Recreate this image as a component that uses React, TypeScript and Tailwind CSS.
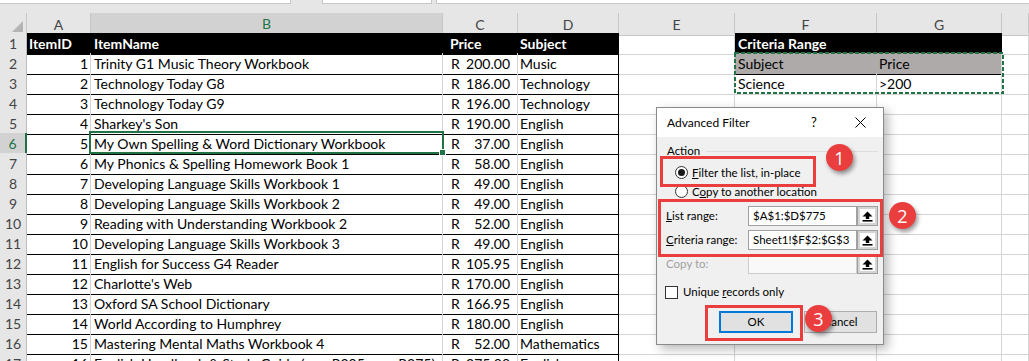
import React from 'react';

type Item = { id: number; name: string; price: string; subject: string };

const items: Item[] = [
  { id: 1, name: 'Trinity G1 Music Theory Workbook', price: '200.00', subject: 'Music' },
  { id: 2, name: 'Technology Today G8', price: '186.00', subject: 'Technology' },
  { id: 3, name: 'Technology Today G9', price: '196.00', subject: 'Technology' },
  { id: 4, name: "Sharkey's Son", price: '190.00', subject: 'English' },
  { id: 5, name: 'My Own Spelling & Word Dictionary Workbook', price: '37.00', subject: 'English' },
  { id: 6, name: 'My Phonics & Spelling Homework Book 1', price: '58.00', subject: 'English' },
  { id: 7, name: 'Developing Language Skills Workbook 1', price: '49.00', subject: 'English' },
  { id: 8, name: 'Developing Language Skills Workbook 2', price: '49.00', subject: 'English' },
  { id: 9, name: 'Reading with Understanding Workbook 2', price: '52.00', subject: 'English' },
  { id: 10, name: 'Developing Language Skills Workbook 3', price: '49.00', subject: 'English' },
  { id: 11, name: 'English for Success G4 Reader', price: '105.95', subject: 'English' },
  { id: 12, name: "Charlotte's Web", price: '170.00', subject: 'English' },
  { id: 13, name: 'Oxford SA School Dictionary', price: '166.95', subject: 'English' },
  { id: 14, name: 'World According to Humphrey', price: '180.00', subject: 'English' },
  { id: 15, name: 'Mastering Mental Maths Workbook 4', price: '52.00', subject: 'Mathematics' },
  { id: 16, name: 'English Handbook & Study Guide (was R205 now R275)', price: '275.00', subject: 'English' },
];

const rowGrid = 'grid h-[20px] grid-cols-[27px_64px_352px_75px_101px_116px_142px_125px_1fr]';
const gridCell = 'border-r border-b border-[#d4d4d4]';
const tableCell = 'flex items-center border-r border-b border-r-[#d4d4d4] border-b-black';

function RowHead({ n, active }: { n: number; active?: boolean }) {
  if (active) {
    return (
      <div className="flex items-center justify-center border-b border-r-2 border-b-[#c6c6c6] border-r-[#217346] bg-[#d2d2d2] text-[#217346]">
        {n}
      </div>
    );
  }
  return (
    <div className="flex items-center justify-center border-b border-r border-b-[#d4d4d4] border-r-[#bdbdbd] bg-[#e6e6e6] text-[#444]">
      {n}
    </div>
  );
}

function UpArrow() {
  return (
    <svg width="11" height="11" viewBox="0 0 11 11">
      <path d="M5.5 0.5 L10.5 5.5 H7.2 V8 H3.8 V5.5 H0.5 Z" fill="#000" />
      <rect x="0.5" y="9" width="10" height="1.6" fill="#000" />
    </svg>
  );
}

function RefEdit({ value, disabled }: { value?: string; disabled?: boolean }) {
  return (
    <div className="flex h-[20px]">
      <div
        className={
          disabled
            ? 'w-[109px] border border-[#cccccc] bg-[#f9f9f9]'
            : 'flex w-[109px] items-center whitespace-nowrap border border-[#a0a0a0] bg-white pl-[4px] text-black'
        }
      >
        {value}
      </div>
      <div className="flex w-[21px] items-center justify-center border border-[#a0a0a0] bg-[#d4d4d4] p-[2px]">
        <div className="flex h-full w-full items-center justify-center bg-white">
          <UpArrow />
        </div>
      </div>
    </div>
  );
}

function Badge({ n, pos }: { n: number; pos: string }) {
  return (
    <div
      className={`absolute flex h-[27px] w-[27px] items-center justify-center rounded-full bg-[#ea3e3e] font-['Open_Sans',sans-serif] text-[18px] leading-none text-white shadow-[2px_3px_4px_rgba(0,0,0,0.4)] ${pos}`}
    >
      {n}
    </div>
  );
}

function Dialog() {
  return (
    <div className="absolute left-[656px] top-[107px] flex h-[238px] w-[228px] flex-col border border-[#8a8a8a] font-['Lato',sans-serif] text-[11.5px] text-black shadow-[4px_4px_10px_rgba(0,0,0,0.28)]">
      <div className="flex h-[29px] items-center bg-white pl-[10px] text-[12px]">
        <span>Advanced Filter</span>
        <span className="ml-auto flex w-[46px] justify-center text-[13px]">?</span>
        <span className="flex w-[46px] justify-center">
          <svg width="11" height="11" viewBox="0 0 11 11">
            <path d="M0.5 0.5 L10.5 10.5 M10.5 0.5 L0.5 10.5" stroke="#000" strokeWidth="1" />
          </svg>
        </span>
      </div>
      <div className="flex flex-1 flex-col bg-[#f0f0f0] pt-[6px]">
        <div className="flex h-[16px] items-center pl-[10px] pr-[5px]">
          <span>Action</span>
          <div className="ml-[6px] h-px flex-1 bg-[#dcdcdc]" />
        </div>
        <div className="mt-[4px] flex h-[19px] items-center pl-[18px]">
          <div className="flex h-[13px] w-[13px] items-center justify-center rounded-full border border-[#333] bg-white">
            <div className="h-[7px] w-[7px] rounded-full bg-[#1a1a1a]" />
          </div>
          <span className="ml-[4px]">
            <span className="underline">F</span>ilter the list, in-place
          </span>
        </div>
        <div className="flex h-[19px] items-center pl-[18px]">
          <div className="h-[13px] w-[13px] rounded-full border border-[#333] bg-white" />
          <span className="ml-[4px]">
            C<span className="underline">o</span>py to another location
          </span>
        </div>
        <div className="mt-[5px] flex items-center pl-[9px]">
          <span className="w-[82px]">
            <span className="underline">L</span>ist range:
          </span>
          <RefEdit value="$A$1:$D$775" />
        </div>
        <div className="mt-[4px] flex items-center pl-[9px]">
          <span className="w-[82px]">
            <span className="underline">C</span>riteria range:
          </span>
          <RefEdit value="Sheet1!$F$2:$G$3" />
        </div>
        <div className="mt-[4px] flex items-center pl-[9px]">
          <span className="w-[82px] text-[#a0a0a0]">Copy to:</span>
          <RefEdit disabled />
        </div>
        <div className="mt-[10px] flex h-[16px] items-center pl-[8px]">
          <div className="h-[13px] w-[13px] border border-[#333] bg-white" />
          <span className="ml-[5px]">
            Unique <span className="underline">r</span>ecords only
          </span>
        </div>
        <div className="mt-[11px] flex justify-end gap-[11px] pr-[6px]">
          <div className="flex h-[22px] w-[74px] items-center justify-center border-2 border-[#0078d7] bg-[#e1e1e1]">
            OK
          </div>
          <div className="flex h-[22px] w-[73px] items-center justify-center border border-[#adadad] bg-[#e1e1e1]">
            Cancel
          </div>
        </div>
      </div>
    </div>
  );
}

export default function App() {
  const colHeads = ['A', 'B', 'C', 'D', 'E', 'F', 'G', ''];
  return (
    <div className="relative h-[361px] w-[1029px] overflow-hidden bg-white font-['Lato',sans-serif] text-[14px] text-black">
      {/* formula bar edge */}
      <div className="flex h-[13px] items-start bg-[#e6e6e6]">
        <div className="h-[4px] w-[291px] border-b border-r border-[#c6c6c6] bg-white" />
        <div className="ml-[31px] h-[4px] w-[110px] border-x border-b border-[#c6c6c6] bg-white" />
        <div className="ml-[4px] h-[4px] flex-1 border-b border-l border-[#c6c6c6] bg-white" />
      </div>

      {/* column headers */}
      <div className={rowGrid}>
        <div className="flex items-end justify-end border-b border-r border-[#c6c6c6] bg-[#e6e6e6] pb-[3px] pr-[3px]">
          <div className="h-0 w-0 border-b-[11px] border-l-[11px] border-b-[#b4b4b4] border-l-transparent" />
        </div>
        {colHeads.map((c) =>
          c === 'B' ? (
            <div
              key={c}
              className="flex items-center justify-center border-b-2 border-r border-b-[#217346] border-r-[#c6c6c6] bg-[#d2d2d2] text-[#217346]"
            >
              {c}
            </div>
          ) : (
            <div
              key={c || 'H'}
              className="flex items-center justify-center border-b border-r border-[#c6c6c6] bg-[#e6e6e6] text-[#444]"
            >
              {c}
            </div>
          ),
        )}
      </div>

      {/* row 1 */}
      <div className={rowGrid}>
        <RowHead n={1} />
        <div className="flex items-center border-b border-r border-black bg-black pl-[2px] font-bold text-white">ItemID</div>
        <div className="flex items-center border-b border-r border-black bg-black pl-[3px] font-bold text-white">ItemName</div>
        <div className="flex items-center border-b border-r border-black bg-black pl-[7px] font-bold text-white">Price</div>
        <div className="flex items-center border-b border-r border-black bg-black pl-[2px] font-bold text-white">Subject</div>
        <div className={gridCell} />
        <div className="flex items-center whitespace-nowrap border-b border-black bg-black pl-[3px] font-bold text-white">
          Criteria Range
        </div>
        <div className="border-b border-r border-black bg-black" />
        <div className={gridCell} />
      </div>

      {items.map((it, i) => {
        const r = i + 2;
        return (
          <div key={it.id} className={rowGrid}>
            <RowHead n={r} active={r === 6} />
            <div className={`${tableCell} justify-end pr-[2px]`}>{it.id}</div>
            <div className={`${tableCell} overflow-hidden whitespace-nowrap pl-[3px]`}>{it.name}</div>
            <div className={`${tableCell} justify-between pl-[8px] pr-[7px]`}>
              <span>R</span>
              <span>{it.price}</span>
            </div>
            <div className="flex items-center border-b border-r border-black pl-[2px]">{it.subject}</div>
            <div className={gridCell} />
            {r === 2 ? (
              <>
                <div className="flex items-center border-b border-r border-b-black border-r-[#aeaaaa] bg-[#aeaaaa] pl-[3px]">Subject</div>
                <div className="flex items-center border-b border-r border-b-black border-r-[#d4d4d4] bg-[#aeaaaa] pl-[2px]">Price</div>
              </>
            ) : r === 3 ? (
              <>
                <div className={`${gridCell} flex items-center pl-[3px]`}>Science</div>
                <div className={`${gridCell} flex items-center pl-[2px]`}>&gt;200</div>
              </>
            ) : (
              <>
                <div className={gridCell} />
                <div className={gridCell} />
              </>
            )}
            <div className={gridCell} />
          </div>
        );
      })}

      {/* copy marquee around F2:G3 */}
      <svg className="absolute left-[734px] top-[52px]" width="270" height="42" viewBox="0 0 270 42">
        <rect x="1" y="1" width="268" height="40" fill="none" stroke="#217346" strokeWidth="2" strokeDasharray="4 2" />
      </svg>

      {/* active cell B6 */}
      <div className="absolute left-[89px] top-[131px] h-[23px] w-[355px] border-2 border-[#217346]" />
      <div className="absolute left-[439px] top-[149px] h-[7px] w-[7px] border border-white bg-[#217346]" />

      <Dialog />

      {/* callouts */}
      <div className="absolute left-[660px] top-[156px] h-[31px] w-[156px] border-[3px] border-[#ea3e3e]" />
      <div className="absolute left-[658px] top-[199px] h-[58px] w-[225px] border-[3px] border-[#ea3e3e]" />
      <div className="absolute left-[705px] top-[305px] h-[36px] w-[98px] border-[3px] border-[#ea3e3e]" />
      <Badge n={1} pos="left-[826px] top-[144px]" />
      <Badge n={2} pos="left-[889px] top-[202px]" />
      <Badge n={3} pos="left-[805px] top-[305px]" />
    </div>
  );
}
